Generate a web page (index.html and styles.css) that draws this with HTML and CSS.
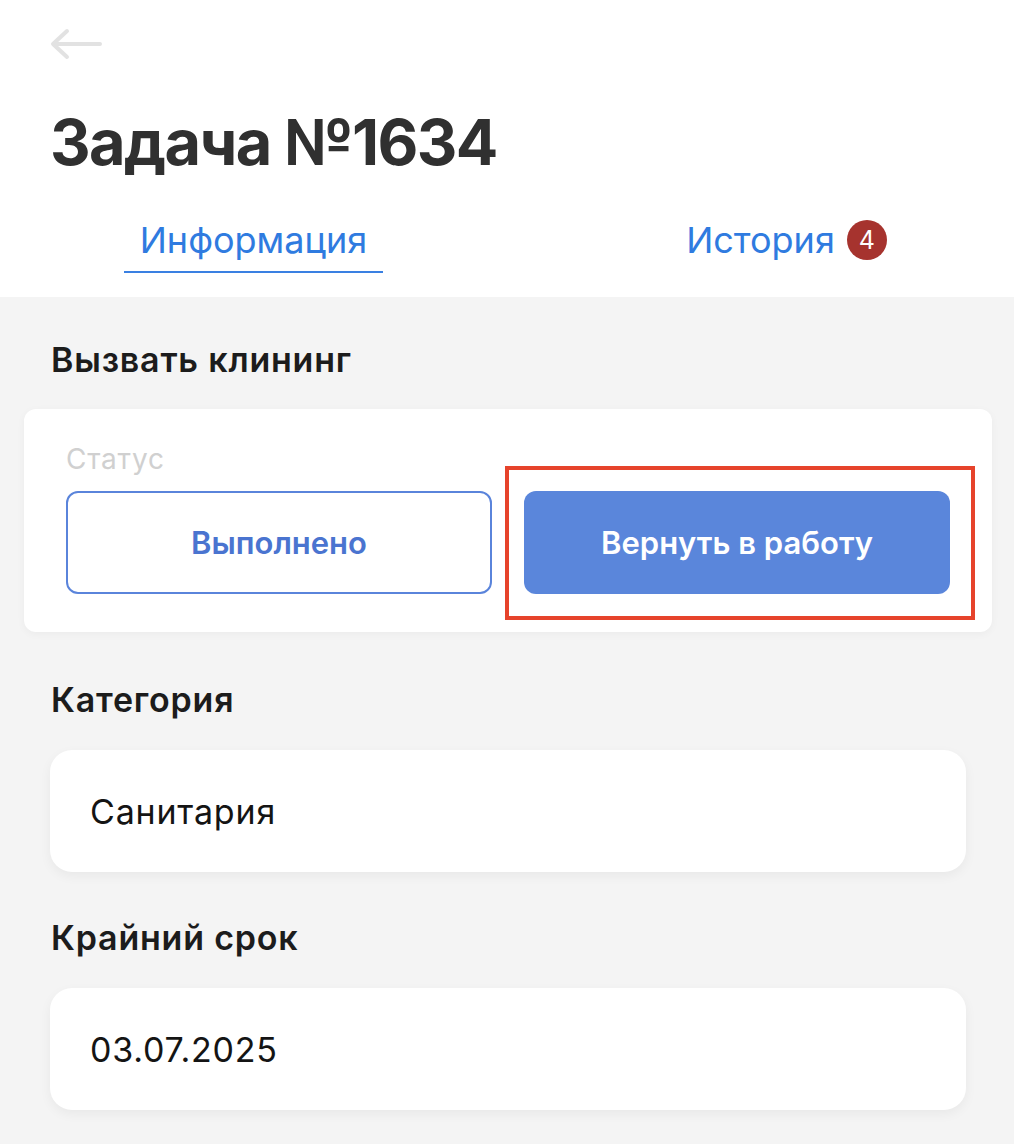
FILE: index.html
```html
<!DOCTYPE html>
<html lang="ru">
<head>
<meta charset="utf-8">
<title>Задача №1634</title>
<link rel="stylesheet" href="styles.css">
</head>
<body>
<div class="page">
  <header class="header">
    <div class="topbar">
      <svg class="back" width="56" height="32" viewBox="0 0 56 32" aria-hidden="true">
        <path d="M52 16 H6 M19 3 L5 16 L19 29" fill="none" stroke="#e2e2e2" stroke-width="4" stroke-linecap="round" stroke-linejoin="round"/>
      </svg>
    </div>
    <h1 class="title">Задача №1634</h1>
    <nav class="tabs">
      <div class="tab tab-active"><span class="tab-label">Информация</span></div>
      <div class="tab"><span class="tab-label">История<span class="badge">4</span></span></div>
    </nav>
  </header>

  <main class="content">
    <h2 class="section-title">Вызвать клининг</h2>
    <div class="status-card">
      <div class="status-label">Статус</div>
      <div class="status-buttons">
        <button class="btn btn-outline">Выполнено</button>
        <div class="btn-wrap">
          <button class="btn btn-filled">Вернуть в работу</button>
          <div class="highlight"></div>
        </div>
      </div>
    </div>

    <h2 class="section-title section-title-2">Категория</h2>
    <div class="field">Санитария</div>

    <h2 class="section-title section-title-3">Крайний срок</h2>
    <div class="field">03.07.2025</div>
  </main>
</div>
</body>
</html>
```

FILE: styles.css
```css
* { box-sizing: border-box; }
html, body { margin: 0; padding: 0; }
body {
  font-family: Inter, "Noto Sans", "Liberation Sans", sans-serif;
  background: #f4f4f4;
  color: #1f1f1f;
}
.page { width: 1014px; min-height: 1144px; background: #f4f4f4; }

.header { background: #ffffff; padding-bottom: 24px; }
.topbar { height: 88px; display: flex; align-items: center; padding-left: 48px; }
.back { display: block; }

.title {
  margin: 14px 0 0 50px;
  font-size: 63px;
  line-height: 80px;
  font-weight: 700;
  color: #303030;
  letter-spacing: -1.6px;
}

.tabs { display: flex; padding-top: 38px; }
.tab { flex: 1; display: flex; justify-content: center; }
.tab-label {
  position: relative;
  font-size: 36px;
  line-height: 40px;
  color: #2f7be0;
  padding: 0 16px 11px;
  border-bottom: 2px solid transparent;
}
.tab-active .tab-label { border-bottom-color: #3a80e2; }
.badge {
  position: absolute;
  left: 100%;
  top: 0;
  margin-left: -4px;
  width: 40px;
  height: 40px;
  border-radius: 50%;
  background: #a6332e;
  color: #fff;
  font-size: 25px;
  line-height: 40px;
  text-align: center;
}

.content { padding: 43px 0 40px; }
.section-title {
  margin: 0 0 0 51px;
  font-size: 34px;
  line-height: 40px;
  font-weight: 600;
  color: #1c1c1c;
  letter-spacing: 0.8px;
}
.status-card {
  margin: 29px 22px 0 24px;
  background: #fff;
  border-radius: 12px;
  padding: 32px 42px 38px;
  box-shadow: 0 2px 8px rgba(0,0,0,0.04);
}
.status-label {
  font-size: 28px;
  line-height: 36px;
  color: #d0d0d0;
  letter-spacing: 0.8px;
  margin-bottom: 14px;
}
.status-buttons { display: grid; grid-template-columns: 1fr 1fr; gap: 32px; }
.btn {
  display: block;
  width: 100%;
  height: 103px;
  border-radius: 12px;
  font-family: inherit;
  font-size: 31px;
  font-weight: 600;
  cursor: pointer;
}
.btn-outline { background: #fff; border: 2px solid #5a84db; color: #4a74d0; }
.btn-filled { background: #5a86db; border: none; color: #fff; }
.btn-wrap { position: relative; }
.highlight {
  position: absolute;
  left: -19px; right: -25px; top: -25px; bottom: -26px;
  border: 4px solid #e6432b;
  pointer-events: none;
}

.section-title-2 { margin-top: 48px; }
.section-title-3 { margin-top: 46px; }
.field {
  margin: 30px 48px 0 50px;
  height: 122px;
  background: #fff;
  border-radius: 22px;
  padding: 0 40px;
  display: flex;
  align-items: center;
  font-size: 34px;
  letter-spacing: 0.8px;
  color: #141414;
  box-shadow: 0 4px 12px rgba(0,0,0,0.05);
}
```
